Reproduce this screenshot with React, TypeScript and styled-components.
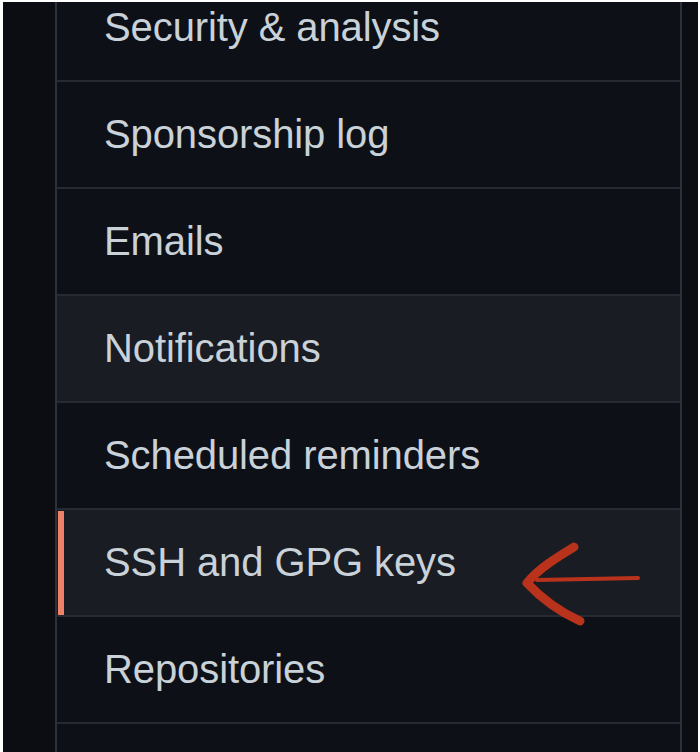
import React from 'react';
import styled, { createGlobalStyle } from 'styled-components';

const GlobalStyle = createGlobalStyle`
  html, body {
    margin: 0;
    padding: 0;
    background: #ffffff;
  }
  body {
    font-family: 'Liberation Sans', Arial, sans-serif;
  }
`;

const Frame = styled.div`
  position: relative;
  width: 700px;
  height: 752px;
  box-sizing: border-box;
  padding: 2px 2px 0 3px;
  background: #ffffff;
  overflow: hidden;
`;

const Screen = styled.div`
  display: flex;
  height: 100%;
  background: #0b0d12;
  overflow: hidden;
`;

const Gutter = styled.div<{ $width: number }>`
  flex: 0 0 ${(props) => props.$width}px;
`;

const Panel = styled.nav`
  flex: 0 0 623px;
  border-left: 2px solid #2d323a;
  border-right: 2px solid #2d323a;
  background: #0d1117;
  overflow: hidden;
`;

const MenuList = styled.ul`
  list-style: none;
  margin: -27px 0 0;
  padding: 0;
`;

const MenuItem = styled.li<{ $active?: boolean; $hover?: boolean }>`
  position: relative;
  display: flex;
  align-items: center;
  height: 105px;
  padding-left: 47px;
  border-bottom: 2px solid #262b33;
  background: ${(props) => (props.$active || props.$hover ? '#191c22' : '#0d1117')};
  color: #c9d1d9;
  font-size: 40px;
  letter-spacing: -0.1px;

  &::before {
    content: '';
    display: ${(props) => (props.$active ? 'block' : 'none')};
    position: absolute;
    left: 1px;
    top: 1px;
    bottom: 0;
    width: 6px;
    background: #ef8168;
  }
`;

const Annotation = styled.svg`
  position: absolute;
  left: 0;
  top: 0;
  pointer-events: none;
`;

const items = [
  { label: 'Security & analysis' },
  { label: 'Sponsorship log' },
  { label: 'Emails' },
  { label: 'Notifications', hover: true },
  { label: 'Scheduled reminders' },
  { label: 'SSH and GPG keys', active: true },
  { label: 'Repositories' },
];

const App = (): JSX.Element => {
  return (
    <Frame>
      <GlobalStyle />
      <Screen>
        <Gutter $width={52} />
        <Panel>
          <MenuList>
            {items.map((item) => (
              <MenuItem key={item.label} $active={item.active} $hover={item.hover}>
                {item.label}
              </MenuItem>
            ))}
          </MenuList>
        </Panel>
        <Gutter $width={16} />
      </Screen>
      <Annotation width="700" height="752" viewBox="0 0 700 752">
        <path d="M537 580 L638 578" stroke="#b9321b" strokeWidth="4" strokeLinecap="round" fill="none" />
        <path
          d="M574 547 C556 558 538 569 527 583 C542 599 560 612 580 621"
          stroke="#b9321b"
          strokeWidth="9"
          strokeLinecap="round"
          strokeLinejoin="round"
          fill="none"
        />
      </Annotation>
    </Frame>
  );
};

export default App;
